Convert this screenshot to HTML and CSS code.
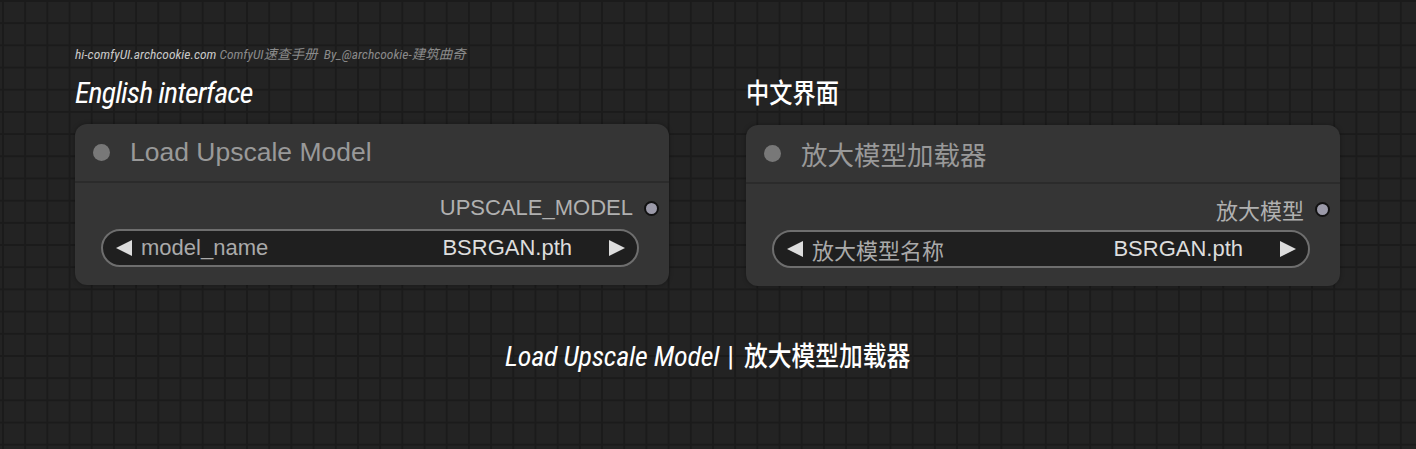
FILE: index.html
```html
<!DOCTYPE html>
<html lang="zh-CN">
<head>
    <meta charset="UTF-8">
    <meta name="viewport" content="width=device-width, initial-scale=1.0">
    <title>Load Upscale Model</title>
    <link rel="stylesheet" href="styles.css">
</head>
<body>
<div class="page">
    <div class="watermark">
        <span class="site">hi-comfyUI.archcookie.com</span>
        <span class="credit">ComfyUI速查手册&nbsp; By_@archcookie-建筑曲奇</span>
    </div>

    <div class="columns">
        <!-- 英文界面 -->
        <div class="column">
            <h2 class="column-title">English interface</h2>
            <div class="node">
                <div class="node-header">
                    <span class="node-dot"></span>
                    <span class="node-title">Load Upscale Model</span>
                </div>
                <div class="node-body">
                    <div class="output-row">
                        <span class="output-label">UPSCALE_MODEL</span>
                        <span class="output-dot"></span>
                    </div>
                    <div class="combo">
                        <svg class="arrow" viewBox="0 0 18 18"><polygon points="17,1 17,17 1,9"/></svg>
                        <span class="combo-label">model_name</span>
                        <span class="combo-value">BSRGAN.pth</span>
                        <svg class="arrow" viewBox="0 0 18 18"><polygon points="1,1 1,17 17,9"/></svg>
                    </div>
                </div>
            </div>
        </div>

        <!-- 中文界面 -->
        <div class="column">
            <h2 class="column-title"><span class="cjk">中文界面</span></h2>
            <div class="node">
                <div class="node-header">
                    <span class="node-dot"></span>
                    <span class="node-title">放大模型加载器</span>
                </div>
                <div class="node-body">
                    <div class="output-row">
                        <span class="output-label">放大模型</span>
                        <span class="output-dot"></span>
                    </div>
                    <div class="combo">
                        <svg class="arrow" viewBox="0 0 18 18"><polygon points="17,1 17,17 1,9"/></svg>
                        <span class="combo-label">放大模型名称</span>
                        <span class="combo-value">BSRGAN.pth</span>
                        <svg class="arrow" viewBox="0 0 18 18"><polygon points="1,1 1,17 17,9"/></svg>
                    </div>
                </div>
            </div>
        </div>
    </div>

    <div class="caption">
        <span>Load Upscale Model</span>
        <span class="bar">|</span>
        <span class="cjk">放大模型加载器</span>
    </div>
</div>
</body>
</html>
```

FILE: styles.css
```css
body {
    margin: 0;
    height: 449px;
    overflow: hidden;
    background-color: #232323;
    background-image:
        linear-gradient(to right, #1b1b1b 2px, transparent 2px),
        linear-gradient(to bottom, #1b1b1b 2px, transparent 2px);
    background-size: 22.2px 22.2px;
    background-position: 2px 0;
    font-family: "Liberation Sans", Arial, "Noto Sans CJK SC", sans-serif;
}

.page {
    padding: 44px 0 0 75px;
}

/* 中文标题: 竖直、略窄 */
.cjk {
    display: inline-block;
    font-style: normal;
    font-weight: 500;
    transform: scaleX(0.86);
    transform-origin: left center;
}

/* 顶部水印 */
.watermark {
    font-family: Roboto, "Noto Sans CJK SC", sans-serif;
    font-style: italic;
    font-stretch: 75%;
    font-size: 13.5px;
    line-height: 20px;
}

.watermark .site {
    color: #c8c8c8;
}

.watermark .credit {
    color: #8a8a8a;
}

.columns {
    display: flex;
    gap: 77px;
}

.column {
    width: 594px;
}

.column-title {
    margin: 10px 0 12px;
    font-family: Roboto, "Noto Sans CJK SC", sans-serif;
    font-style: italic;
    font-stretch: 75%;
    font-weight: 400;
    font-size: 30px;
    line-height: 38px;
    color: #fff;
    letter-spacing: -0.9px;
}

.column-title .cjk {
    font-size: 27px;
    letter-spacing: 0;
}

/* 节点卡片 */
.node {
    background-color: #353535;
    border-radius: 12px;
    height: 161px;
    box-shadow: 0 0 4px rgba(0, 0, 0, 0.35);
}

.node-header {
    display: flex;
    align-items: center;
    height: 57px;
    padding-left: 18px;
    border-bottom: 2px solid #2b2b2b;
}

.node-dot {
    width: 17px;
    height: 17px;
    border-radius: 50%;
    background-color: #787878;
    margin-right: 20px;
}

.node-title {
    color: #999;
    font-size: 26.5px;
}

.node-body {
    padding: 12px 30px 0 26px;
}

.output-row {
    display: flex;
    justify-content: flex-end;
    align-items: center;
    height: 26px;
    margin-right: -20px;
}

.output-label {
    color: #b0b0b0;
    font-size: 22px;
}

.output-dot {
    width: 11px;
    height: 11px;
    border-radius: 50%;
    background-color: #9b9aa9;
    border: 2px solid #111;
    margin-left: 11px;
}

/* 下拉选择控件 */
.combo {
    display: flex;
    align-items: center;
    height: 34px;
    margin-top: 8px;
    padding: 0 11px 0 12px;
    background-color: #1f1f1f;
    border: 2px solid #6e6e6e;
    border-radius: 19px;
    font-size: 22px;
}

.arrow {
    width: 18px;
    height: 18px;
    fill: #ddd;
}

.combo-label {
    flex: 1;
    margin-left: 8px;
    color: #aaa;
}

.combo-value {
    color: #ddd;
    margin-right: 36px;
}

.caption {
    display: flex;
    align-items: center;
    margin-top: 53px;
    padding-left: 430px;
    font-family: Roboto, "Noto Sans CJK SC", sans-serif;
    font-style: italic;
    font-stretch: 75%;
    font-weight: 400;
    font-size: 28px;
    line-height: 36px;
    color: #fff;
    letter-spacing: -0.2px;
}

.caption .bar {
    font-style: normal;
    margin: 0 10px 0 8px;
}

.caption .cjk {
    font-size: 27px;
    letter-spacing: 0;
    transform: scaleX(0.88);
}
```
